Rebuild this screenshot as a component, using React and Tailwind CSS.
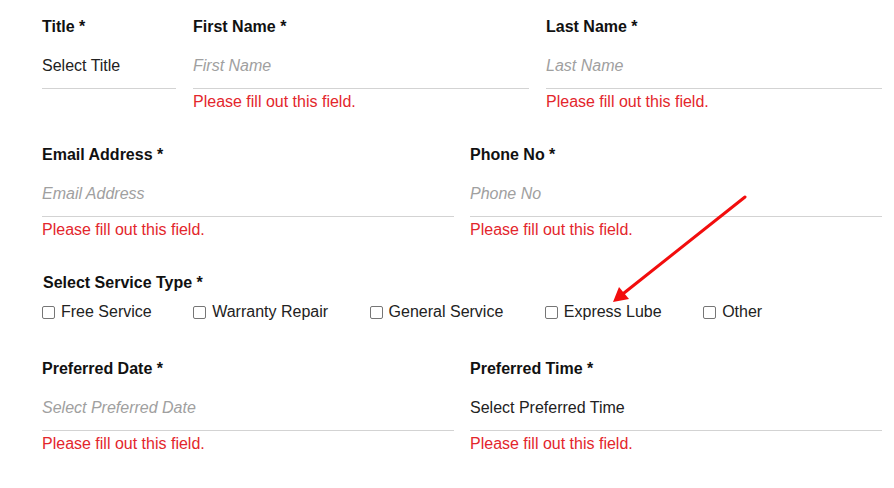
import React from "react";

function Field({ label, value, placeholder, error = true, className = "" }) {
  return (
    <div className={className}>
      <div className="h-[18px] font-bold leading-[18px] text-[#111]">{label}</div>
      <div className="border-b border-[#d3d3d3] pt-[21px] pb-[13px] leading-[18px]">
        {value ? (
          <span className="text-[#222]">{value}</span>
        ) : (
          <span className="italic text-[#a0a0a0]">{placeholder}</span>
        )}
      </div>
      <div className="mt-[4px] h-[18px] leading-[18px] text-[#e3262c]">
        {error ? "Please fill out this field." : ""}
      </div>
    </div>
  );
}

function Check({ label }) {
  return (
    <div className="flex items-center gap-[6px]">
      <div className="h-[13px] w-[13px] rounded-[2px] border border-[#767676] bg-white" />
      <span className="text-[#222]">{label}</span>
    </div>
  );
}

export default function App() {
  return (
    <div
      className="relative min-h-[488px] bg-white pl-[42px] pt-[18px] text-[16px]"
      style={{ fontFamily: '"Liberation Sans", Arial, sans-serif' }}
    >
      <div className="w-[840px]">
        <div className="grid grid-cols-[134px_336px_336px] gap-x-[17px]">
          <Field label="Title *" value="Select Title" error={false} />
          <Field label="First Name *" placeholder="First Name" />
          <Field label="Last Name *" placeholder="Last Name" />
        </div>

        <div className="mt-[35px] grid grid-cols-2 gap-x-[16px]">
          <Field label="Email Address *" placeholder="Email Address" />
          <Field label="Phone No *" placeholder="Phone No" />
        </div>

        <div className="mt-[35px]">
          <div className="h-[18px] pl-px font-bold leading-[18px] text-[#111]">Select Service Type *</div>
          <div className="mt-[11px] flex h-[18px] gap-[41.5px] leading-[18px]">
            <Check label="Free Service" />
            <Check label="Warranty Repair" />
            <Check label="General Service" />
            <Check label="Express Lube" />
            <Check label="Other" />
          </div>
        </div>

        <div className="mt-[39px] grid grid-cols-2 gap-x-[16px]">
          <Field label="Preferred Date *" placeholder="Select Preferred Date" />
          <Field label="Preferred Time *" value="Select Preferred Time" />
        </div>
      </div>

      <svg className="pointer-events-none absolute left-0 top-0" width="894" height="488">
        <line x1="745" y1="197" x2="624" y2="293" stroke="#f20d0d" strokeWidth="3" strokeLinecap="round" />
        <polygon points="613,302 619,287 629,299" fill="#f20d0d" />
      </svg>
    </div>
  );
}
